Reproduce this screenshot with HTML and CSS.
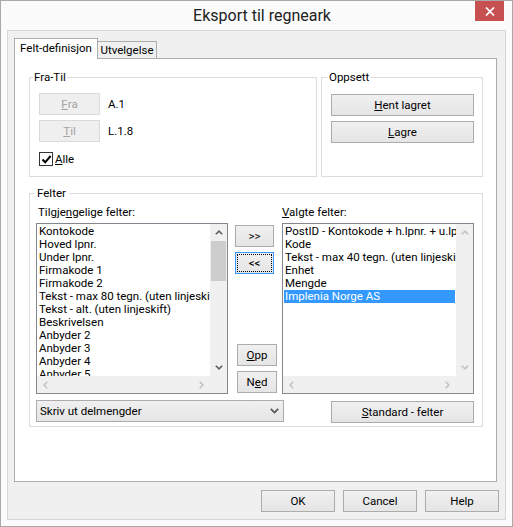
FILE: index.html
```html
<!DOCTYPE html>
<html>
<head>
<meta charset="utf-8">
<title>Eksport til regneark</title>
<link rel="stylesheet" href="styles.css">
</head>
<body>
<div class="window">
  <div class="titlebar">
    <div class="title">Eksport til regneark</div>
    <div class="close"><svg width="10" height="9" viewBox="0 0 10 9"><path d="M1 0.5 L9 8.5 M9 0.5 L1 8.5" stroke="#fff" stroke-width="1.7" fill="none"/></svg></div>
  </div>
  <div class="client">
    <div class="tabstrip">
      <div class="tab active">Felt-definisjon</div>
      <div class="tab">Utvelgelse</div>
    </div>
    <div class="page">
      <div class="top-row">
        <fieldset class="group fratil">
          <legend>Fra-Til</legend>
          <div class="range-row"><button class="btn disabled range-btn"><u>F</u>ra</button><span class="range-val">A.1</span></div>
          <div class="range-row second"><button class="btn disabled range-btn"><u>T</u>il</button><span class="range-val">L.1.8</span></div>
          <label class="check-row"><span class="check"><svg width="11" height="11" viewBox="0 0 11 11"><path d="M1.5 5.5 L4.2 8.3 L9.6 2" fill="none" stroke="#000" stroke-width="2"/></svg></span><span><u>A</u>lle</span></label>
        </fieldset>
        <fieldset class="group oppsett">
          <legend>Oppsett</legend>
          <button class="btn wide"><u>H</u>ent lagret</button>
          <button class="btn wide second"><u>L</u>agre</button>
        </fieldset>
      </div>
      <fieldset class="group felter">
        <legend>Felter</legend>
        <div class="fields-grid">
          <div class="list-label">Tilgje<u>n</u>gelige felter:</div>
          <div></div>
          <div class="list-label right"><u>V</u>algte felter:</div>

          <div class="listbox">
            <div class="items">
              <div class="item">Kontokode</div>
              <div class="item">Hoved lpnr.</div>
              <div class="item">Under lpnr.</div>
              <div class="item">Firmakode 1</div>
              <div class="item">Firmakode 2</div>
              <div class="item">Tekst - max 80 tegn. (uten linjeskift)</div>
              <div class="item">Tekst - alt. (uten linjeskift)</div>
              <div class="item">Beskrivelsen</div>
              <div class="item">Anbyder 2</div>
              <div class="item">Anbyder 3</div>
              <div class="item">Anbyder 4</div>
              <div class="item">Anbyder 5</div>
            </div>
            <div class="vscroll">
              <div class="sb-btn"><svg width="8" height="5" viewBox="0 0 8 5"><path d="M0.8 4.3 L4 1.1 L7.2 4.3" fill="none" stroke="#606060" stroke-width="1.6"/></svg></div>
              <div class="track"><div class="thumb"></div></div>
              <div class="sb-btn"><svg width="8" height="5" viewBox="0 0 8 5"><path d="M0.8 0.7 L4 3.9 L7.2 0.7" fill="none" stroke="#606060" stroke-width="1.6"/></svg></div>
            </div>
            <div class="hscroll">
              <div class="sb-btn"><svg width="5" height="8" viewBox="0 0 5 8"><path d="M4.3 0.8 L1.1 4 L4.3 7.2" fill="none" stroke="#c2c2c2" stroke-width="1.6"/></svg></div>
              <div class="track"></div>
              <div class="sb-btn"><svg width="5" height="8" viewBox="0 0 5 8"><path d="M0.7 0.8 L3.9 4 L0.7 7.2" fill="none" stroke="#c2c2c2" stroke-width="1.6"/></svg></div>
            </div>
            <div class="corner"></div>
          </div>

          <div class="mid-col">
            <button class="btn arrow">&gt;&gt;</button>
            <button class="btn arrow focused">&lt;&lt;</button>
            <button class="btn order push"><u>O</u>pp</button>
            <button class="btn order">N<u>e</u>d</button>
          </div>

          <div class="listbox">
            <div class="items">
              <div class="item">PostID - Kontokode + h.lpnr. + u.lpnr.</div>
              <div class="item">Kode</div>
              <div class="item">Tekst - max 40 tegn. (uten linjeskift)</div>
              <div class="item">Enhet</div>
              <div class="item">Mengde</div>
              <div class="item selected">Implenia Norge AS</div>
            </div>
            <div class="vscroll">
              <div class="sb-btn"><svg width="8" height="5" viewBox="0 0 8 5"><path d="M0.8 4.3 L4 1.1 L7.2 4.3" fill="none" stroke="#c2c2c2" stroke-width="1.6"/></svg></div>
              <div class="track"></div>
              <div class="sb-btn"><svg width="8" height="5" viewBox="0 0 8 5"><path d="M0.8 0.7 L4 3.9 L7.2 0.7" fill="none" stroke="#c2c2c2" stroke-width="1.6"/></svg></div>
            </div>
            <div class="hscroll">
              <div class="sb-btn"><svg width="5" height="8" viewBox="0 0 5 8"><path d="M4.3 0.8 L1.1 4 L4.3 7.2" fill="none" stroke="#c2c2c2" stroke-width="1.6"/></svg></div>
              <div class="track"></div>
              <div class="sb-btn"><svg width="5" height="8" viewBox="0 0 5 8"><path d="M0.7 0.8 L3.9 4 L0.7 7.2" fill="none" stroke="#c2c2c2" stroke-width="1.6"/></svg></div>
            </div>
            <div class="corner"></div>
          </div>
        </div>
        <div class="bottom-row">
          <div class="combo"><span>Skriv ut delmengder</span><svg width="9" height="6" viewBox="0 0 9 6"><path d="M0.8 0.8 L4.5 4.5 L8.2 0.8" fill="none" stroke="#555" stroke-width="1.7"/></svg></div>
          <button class="btn wide std"><u>S</u>tandard - felter</button>
        </div>
      </fieldset>
    </div>
    <div class="footer">
      <button class="btn dlg">OK</button>
      <button class="btn dlg">Cancel</button>
      <button class="btn dlg">Help</button>
    </div>
  </div>
</div>
</body>
</html>
```

FILE: styles.css
```css
* { box-sizing: border-box; }

body {
  margin: 0;
  background: #ffffff;
  font-family: Roboto, "Liberation Sans", sans-serif;
  font-size: 11.5px;
  color: #000;
}

.window {
  width: 513px;
  height: 527px;
  border: 1px solid #a9a9a9;
  background: #fbfbfb;
  display: flex;
  flex-direction: column;
}

.titlebar {
  height: 29px;
  display: flex;
  align-items: flex-start;
  padding-left: 48px;
  flex-shrink: 0;
}

.title {
  flex: 1;
  text-align: center;
  font-size: 16px;
  line-height: 30px;
  color: #222;
}

.close {
  width: 29px;
  height: 20px;
  margin-right: 8px;
  background: #c75050;
  display: flex;
  align-items: center;
  justify-content: center;
}

.client {
  margin: 0 6px 6px;
  height: 490px;
  border: 1px solid #d6d6d6;
  background: #f0f0f0;
  padding: 7px 6px 7px 6px;
  display: flex;
  flex-direction: column;
}

/* tabs */
.tabstrip {
  height: 20px;
  display: flex;
  align-items: flex-end;
  flex-shrink: 0;
}

.tab {
  border: 1px solid #acacac;
  border-bottom: none;
  display: flex;
  align-items: center;
  justify-content: center;
}

.tab.active {
  width: 84px;
  height: 21px;
  margin-bottom: -1px;
  background: #fff;
  position: relative;
  z-index: 1;
  padding-bottom: 2px;
}

.tab:not(.active) {
  width: 60px;
  height: 17px;
  margin-left: -1px;
  background: #f0f0f0;
}

.page {
  height: 424px;
  margin-right: 2px;
  border: 1px solid #acacac;
  background: #fff;
  padding: 11px 13px 0 14px;
  flex-shrink: 0;
}

.top-row {
  display: flex;
  gap: 4px;
  height: 107px;
}

/* group boxes */
.group {
  margin: 0;
  min-width: 0;
  border: 1px solid #dcdcdc;
}

.group legend {
  line-height: 14px;
  padding: 0 1px;
}

.fratil {
  width: 288px;
  height: 107px;
  padding: 9px 9px 0 9px;
}
.fratil legend { margin-left: -6px; }

.oppsett {
  width: 162px;
  height: 107px;
  padding: 10px 9px 0 9px;
}
.oppsett legend { margin-left: -3px; }

.felter {
  margin-top: 9px;
  height: 241px;
  padding: 5px 8px 0 6px;
}
.felter legend { margin-left: -2px; padding: 0 3px; }

/* buttons */
.btn {
  font: inherit;
  color: #000;
  padding: 0;
  margin: 0;
  height: 22px;
  border: 1px solid #acacac;
  background: linear-gradient(#f0f0f0, #e5e5e5);
  display: flex;
  align-items: center;
  justify-content: center;
  white-space: nowrap;
}

.btn.disabled {
  color: #a3a3a3;
  border-color: #d9d9d9;
  background: #efefef;
}

.range-row {
  display: flex;
  align-items: center;
  gap: 8px;
}
.range-row.second { margin-top: 5px; }

.range-btn { width: 61px; }

.check-row {
  display: flex;
  align-items: center;
  gap: 2px;
  margin-top: 10px;
  height: 14px;
}

.check {
  width: 14px;
  height: 14px;
  border: 1px solid #333;
  background: #fff;
  display: flex;
  align-items: center;
  justify-content: center;
}

.wide { width: 143px; }
.oppsett .second { margin-top: 5px; }

/* fields */
.fields-grid {
  display: grid;
  grid-template-columns: 192px 54px 192px;
  grid-template-rows: 14px 171px;
  row-gap: 4px;
}

.list-label {
  line-height: 14px;
  margin-left: 2px;
}
.list-label.right { margin-left: 0; }

.listbox {
  height: 171px;
  border: 1px solid #828790;
  background: #fff;
  display: grid;
  grid-template-columns: 1fr 17px;
  grid-template-rows: 1fr 17px;
  overflow: hidden;
}

.items {
  overflow: hidden;
  padding: 1px 1px 0 1px;
  white-space: nowrap;
}

.item {
  height: 13px;
  line-height: 13px;
  padding-left: 1px;
}

.item.selected {
  background: #3399ff;
  color: #fff;
}

.vscroll {
  background: #f0f0f0;
  display: flex;
  flex-direction: column;
}

.hscroll {
  background: #f0f0f0;
  display: flex;
}

.sb-btn {
  width: 17px;
  height: 17px;
  flex-shrink: 0;
  display: flex;
  align-items: center;
  justify-content: center;
}

.track { flex: 1; }

.thumb {
  width: 15px;
  height: 40px;
  margin-left: 1px;
  background: #cdcdcd;
}

.corner { background: #f0f0f0; }

.mid-col {
  display: flex;
  flex-direction: column;
  padding-top: 2px;
  padding-bottom: 1px;
}

.arrow {
  width: 39px;
  margin-left: 7px;
}
.arrow + .arrow { margin-top: 5px; }

.focused {
  border-color: #3399ff;
  outline: 1px dotted #000;
  outline-offset: -3px;
}

.order {
  width: 40px;
  margin-left: 9px;
}
.order + .order { margin-top: 5px; }
.push { margin-top: auto; }

.bottom-row {
  display: flex;
  align-items: flex-start;
  margin-top: 6px;
}

.combo {
  width: 248px;
  height: 22px;
  border: 1px solid #acacac;
  background: linear-gradient(#f0f0f0, #e5e5e5);
  display: flex;
  align-items: center;
  justify-content: space-between;
  padding: 0 4px 0 3px;
}

.std {
  margin-left: auto;
  margin-top: 1px;
}

/* footer */
.footer {
  display: flex;
  justify-content: flex-end;
  gap: 8px;
  margin-top: 8px;
}

.dlg { width: 74px; }
```
